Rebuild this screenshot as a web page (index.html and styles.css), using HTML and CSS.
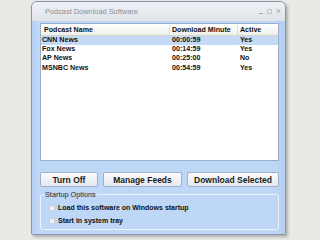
FILE: index.html
```html
<!DOCTYPE html>
<html lang="en">
<head>
  <meta charset="utf-8">
  <title>Podcast Download Software</title>
  <link rel="stylesheet" href="styles.css">
</head>
<body>
  <div class="window">
    <div class="titlebar">
      <span class="title">Podcast Download Software</span>
      <div class="win-controls">
        <span class="wc-min"></span>
        <span class="wc-max"></span>
        <span class="wc-close">&times;</span>
      </div>
    </div>

    <div class="client">
      <div class="listview">
        <div class="lv-header">
          <div class="lv-col first">Podcast Name</div>
          <div class="lv-col">Download Minute</div>
          <div class="lv-col">Active</div>
        </div>
        <div class="lv-row selected">
          <div class="lv-cell">CNN News</div>
          <div class="lv-cell">00:00:59</div>
          <div class="lv-cell">Yes</div>
        </div>
        <div class="lv-row">
          <div class="lv-cell">Fox News</div>
          <div class="lv-cell">00:14:59</div>
          <div class="lv-cell">Yes</div>
        </div>
        <div class="lv-row">
          <div class="lv-cell">AP News</div>
          <div class="lv-cell">00:25:00</div>
          <div class="lv-cell">No</div>
        </div>
        <div class="lv-row">
          <div class="lv-cell">MSNBC News</div>
          <div class="lv-cell">00:54:59</div>
          <div class="lv-cell">Yes</div>
        </div>
      </div>

      <div class="buttons">
        <button class="btn btn-off">Turn Off</button>
        <button class="btn btn-feeds">Manage Feeds</button>
        <button class="btn btn-download">Download Selected</button>
      </div>

      <fieldset class="group">
        <legend>Startup Options</legend>
        <label class="check"><span class="box"></span>Load this software on Windows startup</label>
        <label class="check"><span class="box"></span>Start in system tray</label>
      </fieldset>
    </div>
  </div>
</body>
</html>
```

FILE: styles.css
```css
:root {
  --page: #e9e9e5;
  --frame: #8596ae;
  --face: #bfd7f7;
  --title-top: #eef1f5;
  --title-bottom: #dfe4ea;
  --select: #c3d9f5;
  --text: #111111;
  --muted: #8a8f96;
}

* {
  margin: 0;
  padding: 0;
  box-sizing: border-box;
}

body {
  width: 320px;
  height: 240px;
  overflow: hidden;
  background-color: var(--page);
  font-family: "Liberation Sans", Arial, sans-serif;
  color: var(--text);
  padding: 1px 0 0 31px;
}

.window {
  width: 255px;
  height: 234px;
  border: 1px solid var(--frame);
  border-radius: 6px 6px 2px 2px;
  background-color: var(--face);
  box-shadow: 2px 2px 3px rgba(0, 0, 0, 0.25);
  display: flex;
  flex-direction: column;
  overflow: hidden;
}

.titlebar {
  height: 19px;
  display: flex;
  align-items: center;
  justify-content: space-between;
  padding: 0 4px 0 13px;
  background: linear-gradient(to bottom, var(--title-top), var(--title-bottom));
}

.title {
  font-size: 7.4px;
  color: var(--muted);
}

.win-controls {
  display: flex;
  align-items: center;
  gap: 4px;
  color: #a3a8b0;
}

.wc-min {
  width: 4px;
  height: 1px;
  margin-top: 3px;
  background-color: #a3a8b0;
}

.wc-max {
  width: 5px;
  height: 5px;
  border: 1px solid #c2c6cc;
}

.wc-close {
  font-size: 9px;
  line-height: 1;
}

.client {
  flex: 1;
  display: flex;
  flex-direction: column;
  padding: 2px 6px 4px 8px;
  background: linear-gradient(to right, #b5cff3, var(--face) 6px, var(--face) 96%, #b3cdf0);
}

.listview {
  height: 138px;
  background-color: #ffffff;
  border: 1px solid #98aecb;
  font-size: 7.1px;
  font-weight: bold;
  color: #111111;
}

.lv-header,
.lv-row {
  display: grid;
  grid-template-columns: 129px 68px 1fr;
}

.lv-header {
  height: 12px;
  align-items: center;
  background: linear-gradient(to bottom, #ffffff, #efefea);
  border-bottom: 1px solid #d6d5cd;
}

.lv-col {
  padding-left: 2px;
  line-height: 10px;
  border-right: 1px solid #dcdbd4;
}

.lv-col.first {
  padding-left: 3px;
}

.lv-col:last-child {
  border-right: none;
}

.lv-row {
  height: 9.2px;
  line-height: 9.2px;
}

.lv-row.selected {
  background-color: var(--select);
}

.lv-cell {
  padding-left: 2px;
  white-space: nowrap;
  color: #111111;
}

.lv-cell:first-child {
  padding-left: 1px;
}

.buttons {
  display: flex;
  gap: 5px;
  margin-top: 11px;
}

.btn {
  height: 15px;
  font-family: "Liberation Sans", Arial, sans-serif;
  font-size: 8.5px;
  font-weight: bold;
  color: #1a1a1a;
  border: 1px solid #9fb1c8;
  border-radius: 2px;
  background: linear-gradient(to bottom, #fbfcfd, #e3e9f1);
  cursor: pointer;
}

.btn-off {
  width: 58px;
}

.btn-feeds {
  width: 79px;
}

.btn-download {
  flex: 1;
}

.group {
  margin-top: 3px;
  height: 40px;
  border: 1px solid #eaf2fd;
  border-radius: 3px;
  padding: 4px 0 0 8px;
  display: flex;
  flex-direction: column;
  gap: 4px;
}

.group legend {
  margin-left: -5px;
  padding: 0 1px;
  font-size: 7.3px;
  color: #2a2f36;
  line-height: 9px;
}

.check {
  display: flex;
  align-items: center;
  gap: 3px;
  font-size: 7px;
  font-weight: bold;
  height: 9px;
}

.box {
  width: 6px;
  height: 6px;
  border: 1px solid #c9d0d8;
  background: linear-gradient(to bottom right, #e4e7ea, #fbfbfb);
}
```
